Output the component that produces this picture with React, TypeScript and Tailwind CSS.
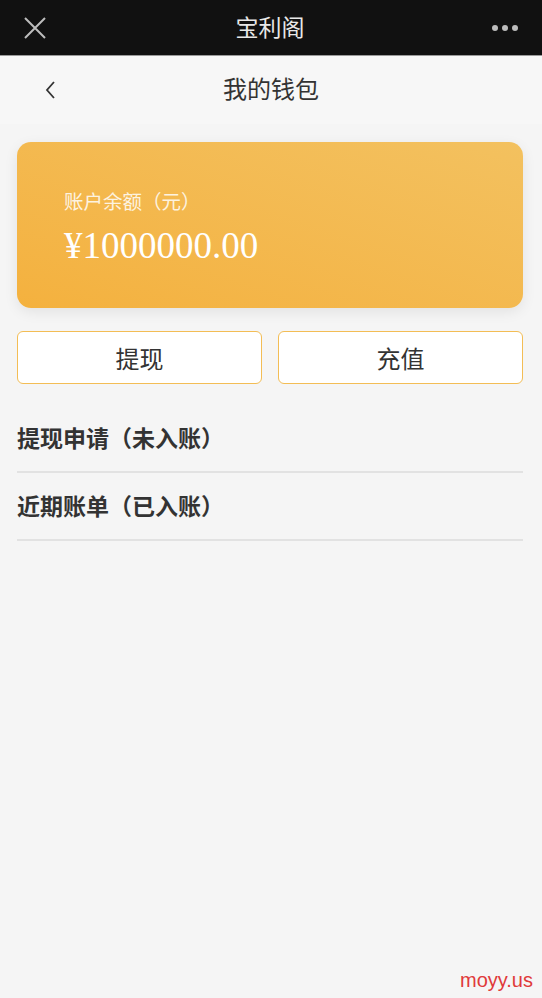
import React from 'react';

const font = { fontFamily: '"Noto Sans CJK SC", "Noto Sans", sans-serif' };

const App = () => {
  const entries = ['提现申请（未入账）', '近期账单（已入账）'];

  return (
    <div className="w-[542px] h-[998px] bg-[#f5f5f5] flex flex-col relative overflow-hidden" style={font}>
      {/* top bar */}
      <div className="h-[56px] bg-[#111111] border-b border-[#9a9a9a] flex items-center justify-between px-[22px] shrink-0">
        <svg width="26" height="26" viewBox="0 0 26 26" className="text-[#bdbdbd]">
          <path d="M3 3 L23 23 M23 3 L3 23" stroke="currentColor" strokeWidth="2" fill="none" />
        </svg>
        <span className="text-[23px] text-[#e8e8e8] leading-none -mt-[2px]">宝利阁</span>
        <div className="flex gap-[4px] mr-[2px]">
          <span className="w-[6px] h-[6px] rounded-full bg-[#bdbdbd]" />
          <span className="w-[6px] h-[6px] rounded-full bg-[#bdbdbd]" />
          <span className="w-[6px] h-[6px] rounded-full bg-[#bdbdbd]" />
        </div>
      </div>

      {/* page header */}
      <div className="h-[68px] bg-[#f7f7f7] flex items-center relative shrink-0">
        <svg width="14" height="22" viewBox="0 0 14 22" className="ml-[44px] text-[#333]">
          <path d="M10 3 L3 11 L10 19" stroke="currentColor" strokeWidth="1.8" fill="none" />
        </svg>
        <span className="absolute left-0 right-0 text-center text-[24px] text-[#333] pointer-events-none -mt-[4px]">我的钱包</span>
      </div>

      <div className="pl-[17px] pr-[19px] pt-[18px] flex flex-col">
        {/* balance card */}
        <div className="h-[166px] rounded-[14px] bg-gradient-to-tr from-[#f4b13e] to-[#f3c15f] shadow-[0_4px_14px_rgba(0,0,0,0.08)] px-[47px] pt-[45px] flex flex-col">
          <span className="text-[19.5px] text-[#fdf3e0] leading-[28px]">账户余额（元）</span>
          <span
            className="text-[37px] text-white leading-[46px] mt-[8px]"
            style={{ fontFamily: '"Liberation Serif", "Times New Roman", serif' }}
          >
            ¥1000000.00
          </span>
        </div>

        {/* actions */}
        <div className="grid grid-cols-2 gap-[16px] mt-[23px]">
          <button className="h-[53px] bg-white border border-[#f3bd55] rounded-[6px] text-[24px] text-[#333]">提现</button>
          <button className="h-[53px] bg-white border border-[#f3bd55] rounded-[6px] text-[24px] text-[#333]">充值</button>
        </div>

        {/* entries */}
        <div className="flex flex-col mt-[21px]">
          {entries.map((e, i) => (
            <div key={i} className="h-[68px] border-b-2 border-[#e2e2e2] flex items-center">
              <span className="text-[23px] font-bold text-[#333] -mt-[2px]">{e}</span>
            </div>
          ))}
        </div>
      </div>

      <span
        className="absolute right-[9px] bottom-[3px] text-[20px] text-[#e03a3a]"
        style={{ fontFamily: '"Liberation Sans", Arial, sans-serif' }}
      >
        moyy.us
      </span>
    </div>
  );
};

export default App;
